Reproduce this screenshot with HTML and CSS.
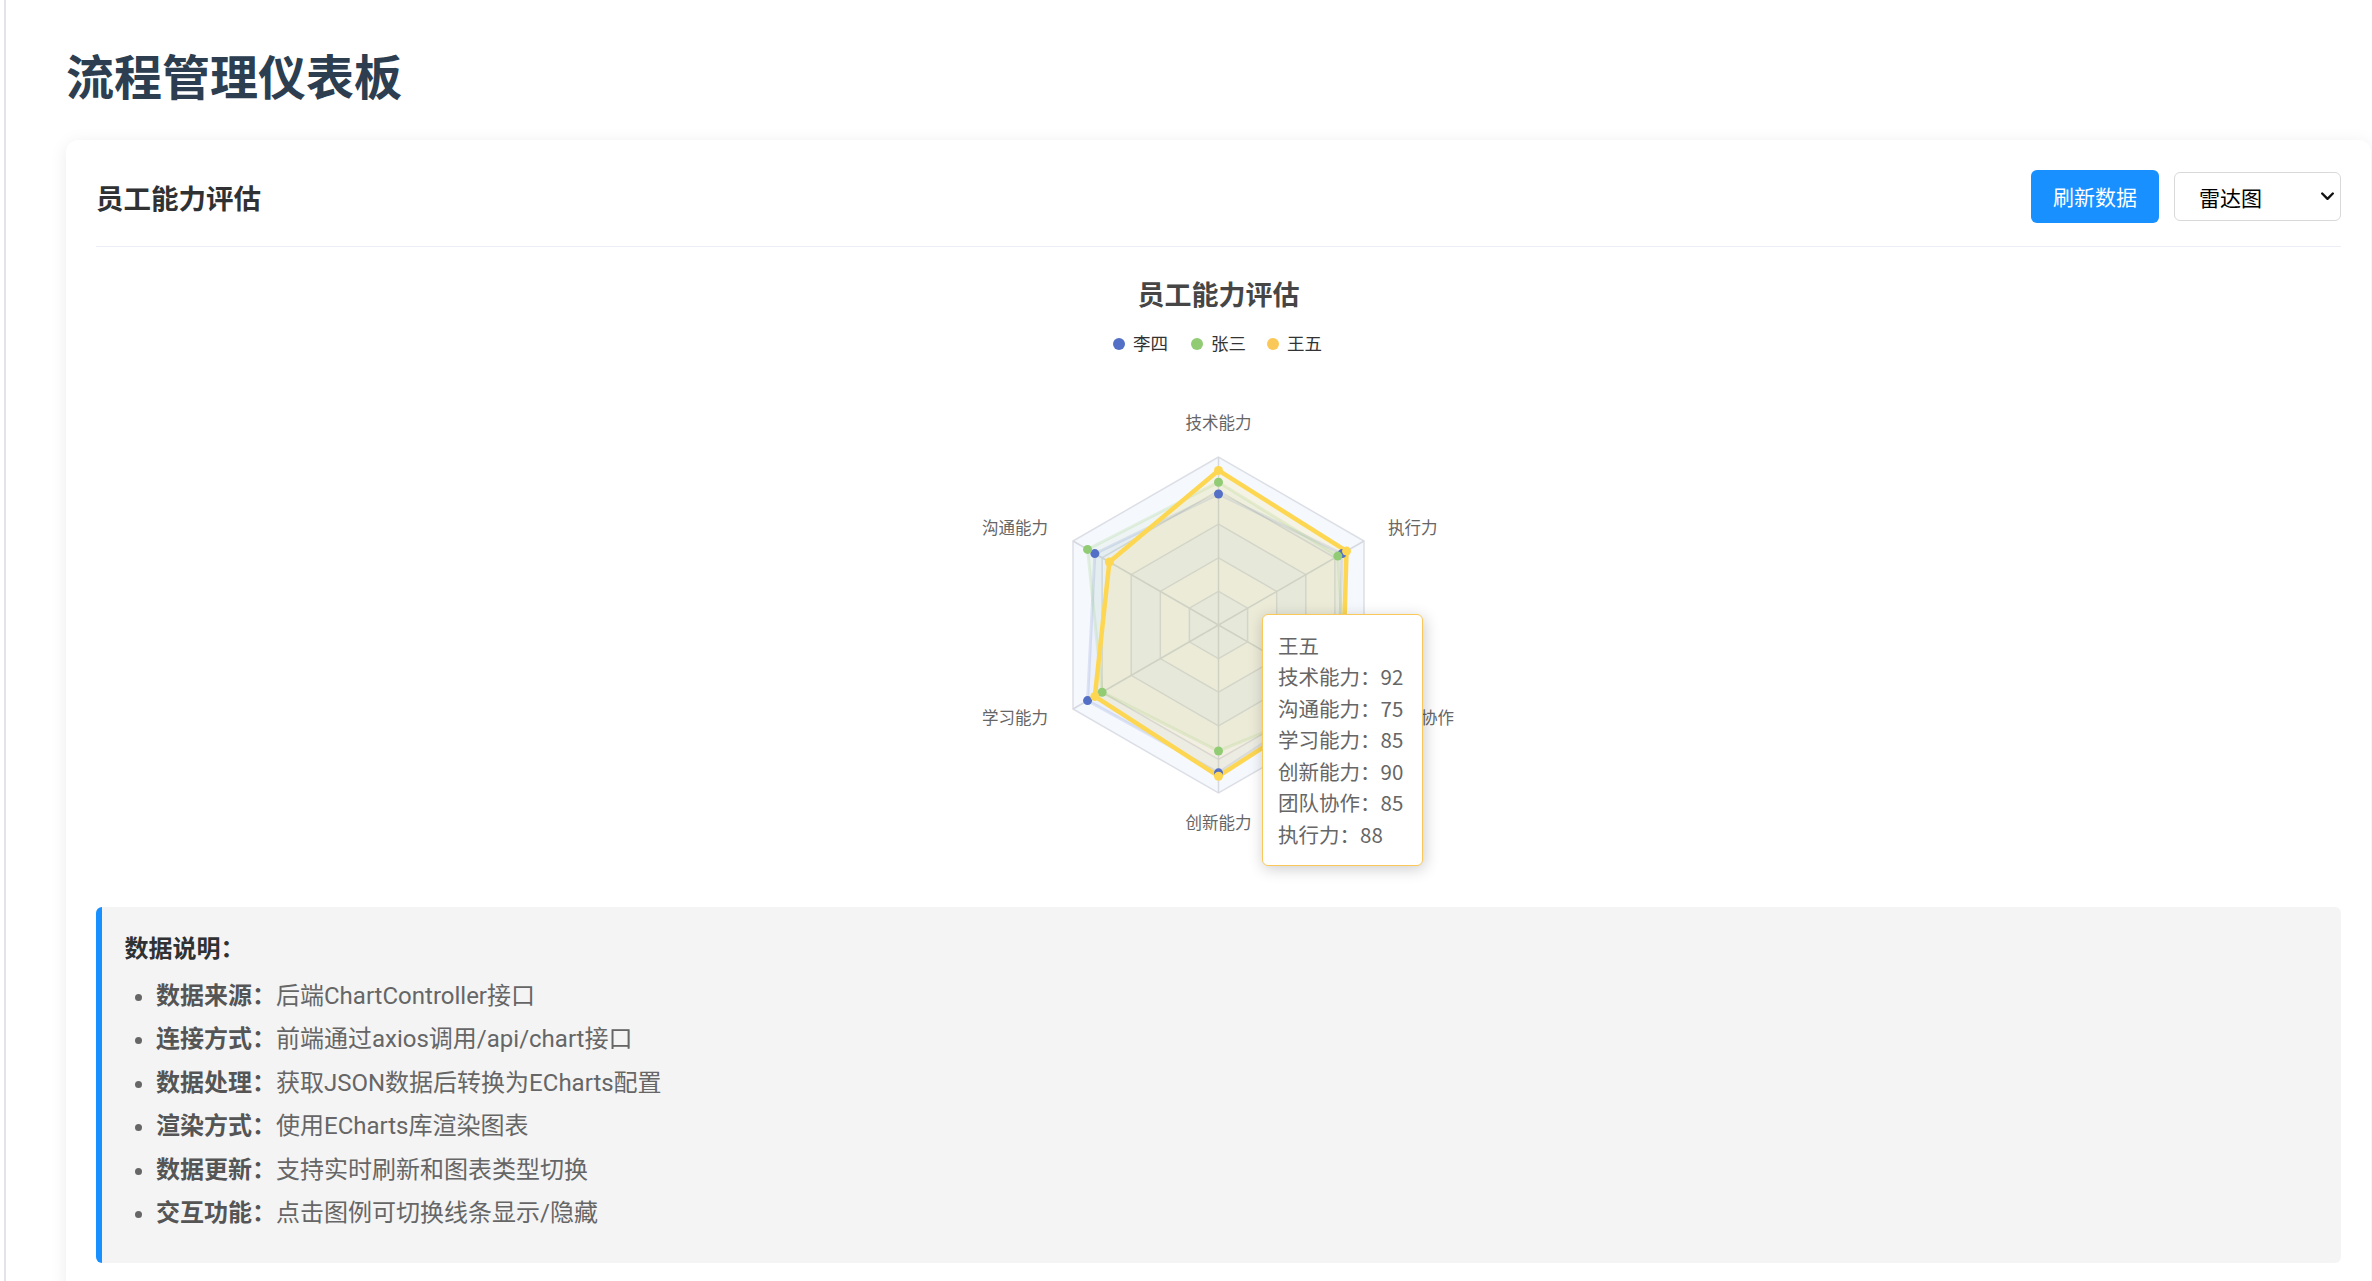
FILE: index.html
```html
<!DOCTYPE html>
<html lang="zh-CN">
<head>
<meta charset="utf-8">
<title>流程管理仪表板</title>
<link rel="stylesheet" href="styles.css">
</head>
<body>
<main class="main">
  <h1 class="page-title">流程管理仪表板</h1>
  <section class="card">
    <header class="card-header">
      <h2 class="card-title">员工能力评估</h2>
      <div class="actions">
        <button class="btn-primary" type="button">刷新数据</button>
        <div class="select">
          <span class="select-text">雷达图</span>
          <svg class="select-arrow" width="13" height="9" viewBox="0 0 13 9"><path d="M1.2 1.5 L6.5 6.8 L11.8 1.5" /></svg>
        </div>
      </div>
    </header>

    <div class="chart">
      <svg class="chart-svg" width="2245" height="600" viewBox="0 0 2245 600">
        <text class="c-title" x="1122.5" y="28" text-anchor="middle">员工能力评估</text>

        <circle class="dot-blue" cx="1023" cy="67" r="6"/>
        <text class="c-legend" x="1037" y="73">李四</text>
        <circle class="dot-green" cx="1101" cy="67" r="6"/>
        <text class="c-legend" x="1115" y="73">张三</text>
        <circle class="dot-yellow" cx="1177" cy="67" r="6"/>
        <text class="c-legend" x="1191" y="73">王五</text>

        <polygon class="band-b" points="1122.5,180 977.01,264 977.01,432 1122.5,516 1267.99,432 1267.99,264"/>
        <polygon class="band-a" points="1122.5,213.6 1006.11,280.8 1006.11,415.2 1122.5,482.4 1238.89,415.2 1238.89,280.8"/>
        <polygon class="band-b" points="1122.5,247.2 1035.2,297.6 1035.2,398.4 1122.5,448.8 1209.8,398.4 1209.8,297.6"/>
        <polygon class="band-a" points="1122.5,280.8 1064.3,314.4 1064.3,381.6 1122.5,415.2 1180.7,381.6 1180.7,314.4"/>
        <polygon class="band-b" points="1122.5,314.4 1093.4,331.2 1093.4,364.8 1122.5,381.6 1151.6,364.8 1151.6,331.2"/>

        <g class="grid-lines">
          <line x1="1122.5" y1="348" x2="1122.5" y2="180"/>
          <line x1="1122.5" y1="348" x2="977.01" y2="264"/>
          <line x1="1122.5" y1="348" x2="977.01" y2="432"/>
          <line x1="1122.5" y1="348" x2="1122.5" y2="516"/>
          <line x1="1122.5" y1="348" x2="1267.99" y2="432"/>
          <line x1="1122.5" y1="348" x2="1267.99" y2="264"/>
        </g>

        <polygon class="s-blue" points="1122.5,216.96 998.84,276.6 991.56,423.6 1122.5,495.84 1241.8,416.88 1246.16,276.6"/>
        <polygon class="s-green" points="1122.5,205.2 991.56,272.4 1006.11,415.2 1122.5,474 1250.53,421.92 1241.8,279.12"/>
        <polygon class="s-yellow" points="1122.5,193.44 1013.38,285 998.84,419.4 1122.5,499.2 1246.16,419.4 1250.53,274.08"/>

        <g class="pts-blue">
          <circle cx="1122.5" cy="216.96" r="4.5"/><circle cx="998.84" cy="276.6" r="4.5"/><circle cx="991.56" cy="423.6" r="4.5"/>
          <circle cx="1122.5" cy="495.84" r="4.5"/><circle cx="1241.8" cy="416.88" r="4.5"/><circle cx="1246.16" cy="276.6" r="4.5"/>
        </g>
        <g class="pts-green">
          <circle cx="1122.5" cy="205.2" r="4.5"/><circle cx="991.56" cy="272.4" r="4.5"/><circle cx="1006.11" cy="415.2" r="4.5"/>
          <circle cx="1122.5" cy="474" r="4.5"/><circle cx="1250.53" cy="421.92" r="4.5"/><circle cx="1241.8" cy="279.12" r="4.5"/>
        </g>
        <g class="pts-yellow">
          <circle cx="1122.5" cy="193.44" r="4.5"/><circle cx="1013.38" cy="285" r="4.5"/><circle cx="998.84" cy="419.4" r="4.5"/>
          <circle cx="1122.5" cy="499.2" r="4.5"/><circle cx="1246.16" cy="419.4" r="4.5"/><circle cx="1250.53" cy="274.08" r="4.5"/>
        </g>

        <text class="c-axis" x="1122.5" y="152" text-anchor="middle">技术能力</text>
        <text class="c-axis" x="952" y="257" text-anchor="end">沟通能力</text>
        <text class="c-axis" x="952" y="447" text-anchor="end">学习能力</text>
        <text class="c-axis" x="1122.5" y="552" text-anchor="middle">创新能力</text>
        <text class="c-axis" x="1292" y="447">团队协作</text>
        <text class="c-axis" x="1292" y="257">执行力</text>
      </svg>

      <div class="tooltip">
        <div>王五</div>
        <div>技术能力：92</div>
        <div>沟通能力：75</div>
        <div>学习能力：85</div>
        <div>创新能力：90</div>
        <div>团队协作：85</div>
        <div>执行力：88</div>
      </div>
    </div>

    <div class="note">
      <h4 class="note-title">数据说明：</h4>
      <ul class="note-list">
        <li><strong>数据来源：</strong>后端ChartController接口</li>
        <li><strong>连接方式：</strong>前端通过axios调用/api/chart接口</li>
        <li><strong>数据处理：</strong>获取JSON数据后转换为ECharts配置</li>
        <li><strong>渲染方式：</strong>使用ECharts库渲染图表</li>
        <li><strong>数据更新：</strong>支持实时刷新和图表类型切换</li>
        <li><strong>交互功能：</strong>点击图例可切换线条显示/隐藏</li>
      </ul>
    </div>
  </section>
</main>
</body>
</html>
```

FILE: styles.css
```css
html {
  overflow: hidden;
  scrollbar-width: none;
}

body {
  margin: 0;
  background: #ffffff;
  font-family: "Noto Sans CJK SC", sans-serif;
  color: #333;
}

.main {
  margin-left: 4px;
  border-left: 2px solid #e2e4ea;
  padding: 38px 1px 0 60px;
  min-height: 1300px;
}

.page-title {
  margin: 0;
  font-size: 48px;
  line-height: 72px;
  font-weight: 700;
  color: #2c3e50;
}

.card {
  margin-top: 30px;
  background: #fff;
  border-radius: 12px;
  box-shadow: 0 3px 18px rgba(0, 0, 0, 0.08);
  padding: 30px;
}

.card-header {
  display: flex;
  align-items: center;
  justify-content: space-between;
  padding-bottom: 22.5px;
  border-bottom: 1.5px solid #ebeef5;
}

.card-title {
  margin: 0;
  font-size: 27.5px;
  line-height: 40px;
  font-weight: 700;
  color: #303133;
}

.actions {
  display: flex;
  align-items: center;
  gap: 15px;
}

.btn-primary {
  height: 53px;
  padding: 0 22px;
  border: none;
  border-radius: 6px;
  background: #1890ff;
  color: #fff;
  font-family: "Noto Sans CJK SC", sans-serif;
  font-size: 21px;
  line-height: 53px;
}

.select {
  box-sizing: border-box;
  width: 167px;
  height: 49px;
  border: 1.5px solid #d9d9d9;
  border-radius: 6px;
  padding: 0 6px 0 24px;
  display: flex;
  align-items: center;
  justify-content: space-between;
  font-size: 21px;
  color: #000;
  background: #fff;
}

.select-arrow path {
  fill: none;
  stroke: #111;
  stroke-width: 2.4;
  stroke-linecap: round;
  stroke-linejoin: round;
}

.chart {
  position: relative;
  margin-top: 30px;
  height: 600px;
}

.chart-svg {
  display: block;
  width: 100%;
  height: 600px;
  overflow: visible;
}

.c-title {
  font-family: "Noto Sans CJK SC", sans-serif;
  font-size: 27px;
  font-weight: 700;
  fill: #464646;
}

.c-legend {
  font-family: "Noto Sans CJK SC", sans-serif;
  font-size: 17.5px;
  fill: #333;
}

.c-axis {
  font-family: "Noto Sans CJK SC", sans-serif;
  font-size: 16.5px;
  fill: #666;
}

.dot-blue { fill: #5470c6; }
.dot-green { fill: #91cc75; }
.dot-yellow { fill: #fac858; }

.band-a {
  fill: #fbfbfb;
  stroke: #dcdfe6;
  stroke-width: 1.5;
}

.band-b {
  fill: #f5f8fd;
  stroke: #dcdfe6;
  stroke-width: 1.5;
}

.grid-lines line {
  stroke: #d6d9e0;
  stroke-width: 1.5;
}

.s-blue {
  fill: rgba(84, 112, 198, 0.06);
  stroke: rgba(84, 112, 198, 0.16);
  stroke-width: 3;
}

.s-green {
  fill: rgba(145, 204, 117, 0.07);
  stroke: rgba(145, 204, 117, 0.2);
  stroke-width: 3;
}

.s-yellow {
  fill: rgba(250, 215, 88, 0.14);
  stroke: #fdd752;
  stroke-width: 4.5;
  stroke-linejoin: round;
}

.pts-blue circle { fill: #5470c6; }
.pts-green circle { fill: #91cc75; }
.pts-yellow circle { fill: #fdd752; }

.tooltip {
  position: absolute;
  left: 1166px;
  top: 337px;
  width: 161px;
  box-sizing: border-box;
  padding: 15px;
  background: #fff;
  border: 1.5px solid #fac858;
  border-radius: 6px;
  box-shadow: 1.5px 3px 15px rgba(0, 0, 0, 0.2);
  font-size: 20.5px;
  line-height: 31.5px;
  color: #666;
  white-space: nowrap;
}

.note {
  margin-top: 30px;
  background: #f4f4f5;
  border-left: 6px solid #1890ff;
  border-radius: 6px;
  padding: 22px 22.5px 27px;
}

.note-title {
  margin: 0 0 10px;
  font-size: 24px;
  line-height: 36px;
  font-weight: 700;
  color: #303133;
}

.note-list {
  margin: 0;
  padding-left: 31.5px;
  font-family: Roboto, "Noto Sans CJK SC", sans-serif;
  font-size: 24px;
  line-height: 43.5px;
  color: #666;
}

.note-list strong {
  font-weight: 700;
  color: #555;
}
```
